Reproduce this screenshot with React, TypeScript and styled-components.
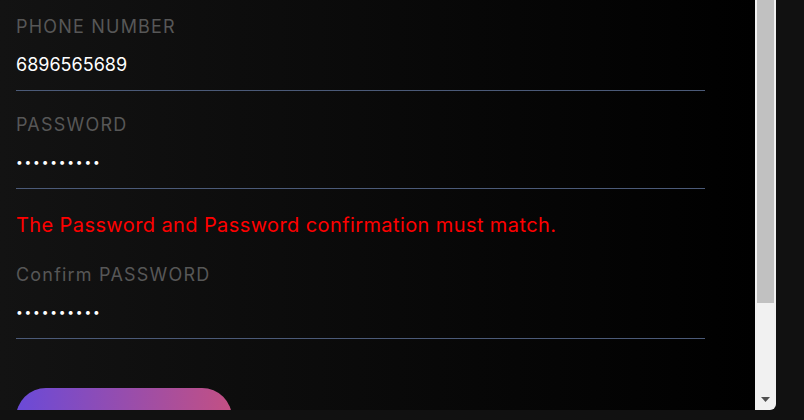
import React from 'react';
import styled, { createGlobalStyle } from 'styled-components';

const GlobalStyle = createGlobalStyle`
  html, body {
    margin: 0;
    padding: 0;
    background: #111111;
    overflow: hidden;
  }
  body {
    font-family: Inter, "Open Sans", sans-serif;
  }
`;

const Frame = styled.div`
  width: 776px;
  height: 410px;
  display: flex;
  overflow: hidden;
  border-radius: 0 0 6px 0;
`;

const Panel = styled.div`
  flex: 1;
  overflow: hidden;
  background: linear-gradient(90deg, #131313 0%, #000000 100%);
`;

const ScrollTrack = styled.div`
  width: 21px;
  display: flex;
  flex-direction: column;
  background: #f1f1f1;
`;

const ScrollThumb = styled.div<{ $size: number }>`
  height: ${(p) => p.$size}px;
  margin: 0 2px;
  background: #c1c1c1;
`;

const ScrollButton = styled.div`
  margin-top: auto;
  height: 21px;
  display: flex;
  align-items: center;
  justify-content: center;
`;

const Form = styled.form`
  width: 689px;
  padding: 13px 0 82px 16px;
  display: flex;
  flex-direction: column;
`;

const Field = styled.div`
  display: flex;
  flex-direction: column;
  margin-bottom: 20px;
`;

const Label = styled.label`
  padding-top: 2px;
  font-size: 18px;
  line-height: 24px;
  color: #575757;
  letter-spacing: 1.2px;
`;

const Input = styled.input`
  height: 52px;
  box-sizing: border-box;
  padding: 0;
  background: transparent;
  border: none;
  border-bottom: 1px solid #4b5a78;
  outline: none;
  color: #ffffff;
  font-family: Inter, "Open Sans", sans-serif;
  font-size: 18px;

  &[type='password'] {
    font-size: 12px;
    letter-spacing: 1.8px;
    padding-bottom: 3px;
  }
`;

const ErrorText = styled.div`
  margin: 4px 0 24px;
  font-size: 20px;
  line-height: 24px;
  letter-spacing: 0.4px;
  color: #ff0000;
`;

const SubmitButton = styled.button`
  margin-top: 29px;
  width: 216px;
  height: 60px;
  border: none;
  border-radius: 30px;
  background: linear-gradient(90deg, #6a4ad8 0%, #c35083 100%);
  color: #ffffff;
  font-family: Inter, "Open Sans", sans-serif;
  font-size: 18px;
`;

const App = () => (
  <>
    <GlobalStyle />
    <Frame>
      <Panel>
        <Form onSubmit={(e) => e.preventDefault()}>
          <Field>
            <Label>PHONE NUMBER</Label>
            <Input type="text" defaultValue="6896565689" />
          </Field>
          <Field>
            <Label>PASSWORD</Label>
            <Input type="password" defaultValue="1234567890" />
          </Field>
          <ErrorText>The Password and Password confirmation must match.</ErrorText>
          <Field>
            <Label>Confirm PASSWORD</Label>
            <Input type="password" defaultValue="1234567899" />
          </Field>
          <SubmitButton type="submit">Register</SubmitButton>
        </Form>
      </Panel>
      <ScrollTrack>
        <ScrollThumb $size={303} />
        <ScrollButton>
          <svg width="9" height="5" viewBox="0 0 9 5">
            <path d="M0 0h9L4.5 5z" fill="#505050" />
          </svg>
        </ScrollButton>
      </ScrollTrack>
    </Frame>
  </>
);

export default App;
